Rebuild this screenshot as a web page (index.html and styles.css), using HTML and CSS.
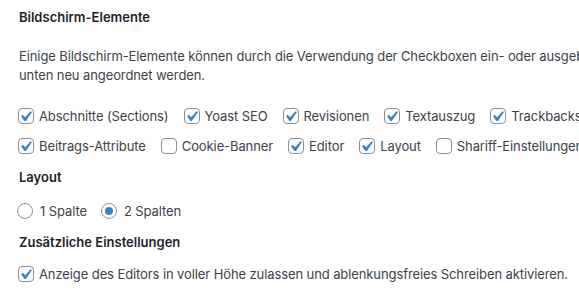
FILE: index.html
```html
<!DOCTYPE html>
<html lang="de">
<head>
<meta charset="utf-8">
<link rel="stylesheet" href="styles.css">
</head>
<body>
<div class="page">
  <fieldset class="group">
    <div class="legend">Bildschirm-Elemente</div>
    <p class="desc">Einige Bildschirm-Elemente können durch die Verwendung der Checkboxen ein- oder ausgeblendet werden. Sie können per Drag-and-Drop nach oben oder<br>unten neu angeordnet werden.</p>
    <div class="row first">
      <label class="opt"><span class="cb"><svg viewBox="0 0 20 20"><path d="M14.83 4.89l1.34.94-5.81 8.38H9.02L5.78 9.67l1.34-1.25 2.57 2.4z"/></svg></span>Abschnitte (Sections)</label>
      <label class="opt"><span class="cb"><svg viewBox="0 0 20 20"><path d="M14.83 4.89l1.34.94-5.81 8.38H9.02L5.78 9.67l1.34-1.25 2.57 2.4z"/></svg></span>Yoast SEO</label>
      <label class="opt"><span class="cb"><svg viewBox="0 0 20 20"><path d="M14.83 4.89l1.34.94-5.81 8.38H9.02L5.78 9.67l1.34-1.25 2.57 2.4z"/></svg></span>Revisionen</label>
      <label class="opt"><span class="cb"><svg viewBox="0 0 20 20"><path d="M14.83 4.89l1.34.94-5.81 8.38H9.02L5.78 9.67l1.34-1.25 2.57 2.4z"/></svg></span>Textauszug</label>
      <label class="opt"><span class="cb"><svg viewBox="0 0 20 20"><path d="M14.83 4.89l1.34.94-5.81 8.38H9.02L5.78 9.67l1.34-1.25 2.57 2.4z"/></svg></span>Trackbacks senden</label>
    </div>
    <div class="row">
      <label class="opt"><span class="cb"><svg viewBox="0 0 20 20"><path d="M14.83 4.89l1.34.94-5.81 8.38H9.02L5.78 9.67l1.34-1.25 2.57 2.4z"/></svg></span>Beitrags-Attribute</label>
      <label class="opt"><span class="cb"></span>Cookie-Banner</label>
      <label class="opt"><span class="cb"><svg viewBox="0 0 20 20"><path d="M14.83 4.89l1.34.94-5.81 8.38H9.02L5.78 9.67l1.34-1.25 2.57 2.4z"/></svg></span>Editor</label>
      <label class="opt"><span class="cb"><svg viewBox="0 0 20 20"><path d="M14.83 4.89l1.34.94-5.81 8.38H9.02L5.78 9.67l1.34-1.25 2.57 2.4z"/></svg></span>Layout</label>
      <label class="opt"><span class="cb"></span>Shariff-Einstellungen</label>
    </div>
  </fieldset>
  <fieldset class="group">
    <div class="legend">Layout</div>
    <div class="row radios">
      <label class="opt"><span class="rb"></span>1 Spalte</label>
      <label class="opt"><span class="rb on"></span>2 Spalten</label>
    </div>
  </fieldset>
  <fieldset class="group">
    <div class="legend">Zusätzliche Einstellungen</div>
    <div class="row last">
      <label class="opt"><span class="cb"><svg viewBox="0 0 20 20"><path d="M14.83 4.89l1.34.94-5.81 8.38H9.02L5.78 9.67l1.34-1.25 2.57 2.4z"/></svg></span>Anzeige des Editors in voller Höhe zulassen und ablenkungsfreies Schreiben aktivieren.</label>
    </div>
  </fieldset>
</div>
</body>
</html>
```
FILE: styles.css
```css
html, body {
  margin: 0;
  padding: 0;
  background: #ffffff;
  overflow: hidden;
}
.page {
  width: 900px;
  padding: 8px 0 0 19px;
  font-family: Inter, "Noto Sans", sans-serif;
  font-size: 13px;
  letter-spacing: -0.1px;
  color: #3c434a;
}
.group {
  margin: 0;
  padding: 0;
  border: 0;
}
.legend {
  font-size: 13px;
  font-weight: 600;
  color: #1d2327;
  line-height: 19px;
  letter-spacing: 0;
}
.group + .group .legend {
  margin-top: 7px;
}
.desc {
  margin: 20px 0 0 0;
  line-height: 19px;
  white-space: nowrap;
}
.row {
  display: flex;
  white-space: nowrap;
  height: 30px;
  align-items: center;
}
.row.first {
  margin-top: 16px;
}
.row.radios {
  margin-top: 9px;
}
.row.last {
  margin-top: 7px;
}
.opt {
  display: flex;
  align-items: center;
  margin-right: 16px;
}
.cb, .rb {
  flex: none;
  box-sizing: border-box;
  width: 16px;
  height: 16px;
  border: 1px solid #8c8f94;
  background: #fff;
  margin: 0 5px 0 -1px;
}
.cb {
  border-radius: 4px;
}
.cb svg {
  display: block;
  width: 21px;
  height: 21px;
  margin: -3px 0 0 -4px;
  fill: #3582c4;
}
.rb {
  border-radius: 50%;
  display: flex;
  align-items: center;
  justify-content: center;
  margin-left: -2px;
  margin-right: 7px;
}
.rb.on::before {
  content: "";
  width: 8px;
  height: 8px;
  border-radius: 50%;
  background: #3582c4;
}
```
